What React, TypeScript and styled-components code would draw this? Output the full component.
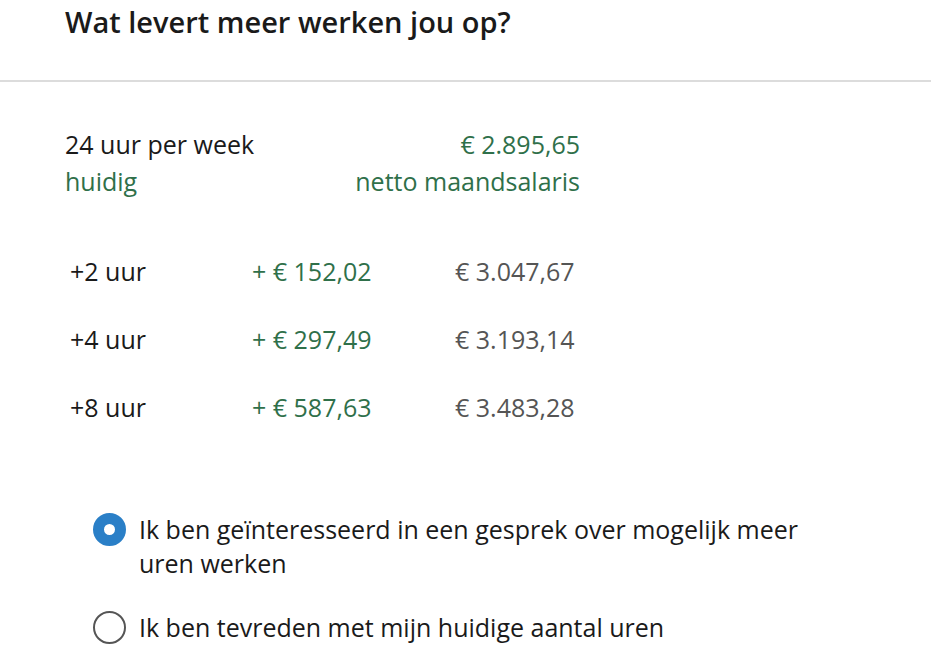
import { useState } from "react";
import styled, { createGlobalStyle } from "styled-components";

const GlobalStyle = createGlobalStyle`
  body {
    margin: 0;
    background: #ffffff;
    font-family: "Open Sans", "Noto Sans", sans-serif;
    color: #1a1a1a;
  }
`;

const rows = [
  { extra: "+2 uur", delta: "+ € 152,02", total: "€ 3.047,67" },
  { extra: "+4 uur", delta: "+ € 297,49", total: "€ 3.193,14" },
  { extra: "+8 uur", delta: "+ € 587,63", total: "€ 3.483,28" },
];

const options = [
  "Ik ben geïnteresseerd in een gesprek over mogelijk meer uren werken",
  "Ik ben tevreden met mijn huidige aantal uren",
];

export default function App() {
  const [choice, setChoice] = useState(0);

  return (
    <>
      <GlobalStyle />
      <Page>
        <Header>
          <Title>Wat levert meer werken jou op?</Title>
        </Header>

        <Content>
          <Summary>
            <SummaryLine>
              <span>24 uur per week</span>
              <Green>€ 2.895,65</Green>
            </SummaryLine>
            <SummaryLine>
              <Green>huidig</Green>
              <Green>netto maandsalaris</Green>
            </SummaryLine>
          </Summary>

          <Table>
            {rows.map((r) => (
              <Row key={r.extra}>
                <Cell>{r.extra}</Cell>
                <Cell $tone="green">{r.delta}</Cell>
                <Cell $tone="gray">{r.total}</Cell>
              </Row>
            ))}
          </Table>

          <Options>
            {options.map((label, i) => (
              <Option key={label} onClick={() => setChoice(i)}>
                <Radio $checked={choice === i} />
                <OptionText>{label}</OptionText>
              </Option>
            ))}
          </Options>
        </Content>
      </Page>
    </>
  );
}

const Page = styled.div`
  width: 931px;
  min-height: 663px;
`;

const Header = styled.header`
  padding: 4px 0 0 65px;
  height: 76px;
  border-bottom: 2px solid #dcdcdc;
`;

const Title = styled.h1`
  margin: 0;
  font-size: 29px;
  line-height: 36px;
  font-weight: 600;
  color: #1a1a1a;
`;

const Content = styled.main`
  padding: 44px 0 0 65px;
`;

const Summary = styled.div`
  width: 515px;
  display: flex;
  flex-direction: column;
`;

const SummaryLine = styled.div`
  display: flex;
  justify-content: space-between;
  font-size: 25px;
  line-height: 37px;
`;

const Green = styled.span`
  color: #2f704a;
`;

const Table = styled.div`
  margin-top: 54px;
  padding-left: 5px;
  display: flex;
  flex-direction: column;
  gap: 34px;
`;

const Row = styled.div`
  display: grid;
  grid-template-columns: 182px 203px auto;
  font-size: 25px;
  line-height: 34px;
`;

const Cell = styled.span<{ $tone?: "green" | "gray" }>`
  color: ${(p) =>
    p.$tone === "green" ? "#2f704a" : p.$tone === "gray" ? "#555555" : "#1a1a1a"};
`;

const Options = styled.div`
  margin-top: 88px;
  padding-left: 28px;
  display: flex;
  flex-direction: column;
  gap: 30px;
`;

const Option = styled.label`
  display: flex;
  align-items: flex-start;
  gap: 13px;
  width: 740px;
  cursor: pointer;
`;

const Radio = styled.span<{ $checked: boolean }>`
  flex: none;
  box-sizing: border-box;
  width: 33px;
  height: 33px;
  margin-top: 1px;
  border-radius: 50%;
  background: #fff;
  border: ${(p) => (p.$checked ? "11px solid #2a7fc7" : "2px solid #555")};
`;

const OptionText = styled.span`
  font-size: 25px;
  line-height: 34px;
  color: #1a1a1a;
`;
